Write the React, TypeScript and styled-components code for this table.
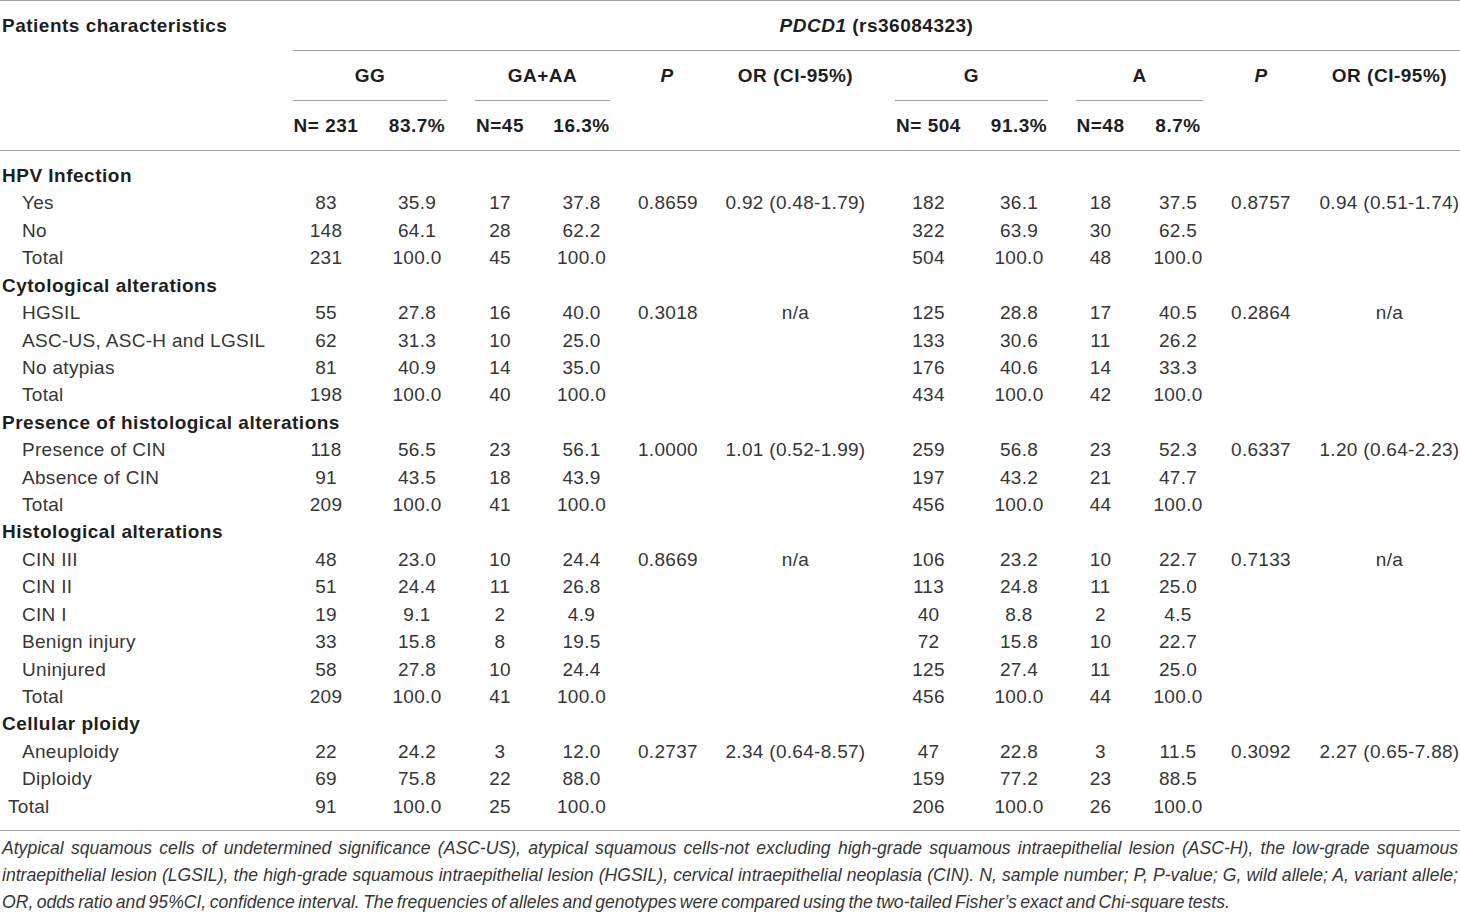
import React from "react";
import styled, { createGlobalStyle } from "styled-components";

const Global = createGlobalStyle`
  html, body { margin: 0; padding: 0; background: #ffffff; }
  body { font-family: "Liberation Sans", Arial, Helvetica, sans-serif; color: #2b2b2b; }
  * { box-sizing: border-box; }
`;

const LINE = "#a3a3a3";
const COLS = "265px 66px 60px 50px 57px 58px 143px 67px 58px 49px 50px 60px 141px";

const Page = styled.div`
  width: 1460px;
`;

const Table = styled.div`
  width: 1460px;
  border-top: 1px solid ${LINE};
`;

const Row = styled.div<{ $h: number; $rule?: boolean }>`
  display: grid;
  grid-template-columns: ${COLS};
  column-gap: 28px;
  height: ${(p) => p.$h}px;
  border-bottom: ${(p) => (p.$rule ? `1px solid ${LINE}` : "none")};
`;

const HeadCell = styled.div<{ $col: string; $align?: "left" | "center"; $rule?: boolean }>`
  grid-column: ${(p) => p.$col};
  display: flex;
  align-items: center;
  justify-content: ${(p) => (p.$align === "left" ? "flex-start" : "center")};
  padding-left: ${(p) => (p.$align === "left" ? "2px" : "0")};
  font-size: 19px;
  font-weight: 700;
  letter-spacing: 0.5px;
  color: #1e1e1e;
  white-space: nowrap;
  border-bottom: ${(p) => (p.$rule ? `1px solid ${LINE}` : "none")};
`;

const Ital = styled.span`
  font-style: italic;
`;

const Body = styled.div`
  padding: 11px 0 10px;
  border-bottom: 1px solid ${LINE};
`;

const DataRow = styled.div`
  display: grid;
  grid-template-columns: ${COLS};
  column-gap: 28px;
  height: 27.43px;
  line-height: 27.43px;
  font-size: 19px;
  letter-spacing: 0.3px;
  color: #363636;
  white-space: nowrap;
`;

const Category = styled.div`
  grid-column: 1 / -1;
  padding-left: 2px;
  font-weight: 700;
  letter-spacing: 0.5px;
  color: #1e1e1e;
`;

const Label = styled.div<{ $indent: number }>`
  padding-left: ${(p) => p.$indent}px;
`;

const Num = styled.div`
  text-align: center;
`;

const Note = styled.div`
  padding-top: 4px;
  font-size: 17.6px;
  word-spacing: -1.5px;
  font-style: italic;
  line-height: 27px;
  color: #363636;
`;

const NoteLine = styled.div<{ $justify?: boolean }>`
  padding: 0 2px;
  text-align: ${(p) => (p.$justify ? "justify" : "left")};
  text-align-last: ${(p) => (p.$justify ? "justify" : "left")};
  white-space: nowrap;
`;

type Item =
  | { kind: "cat"; label: string }
  | { kind: "row"; label: string; v: string[]; indent?: number };

const data: Item[] = [
  { kind: "cat", label: "HPV Infection" },
  { kind: "row", label: "Yes", v: ["83", "35.9", "17", "37.8", "0.8659", "0.92 (0.48-1.79)", "182", "36.1", "18", "37.5", "0.8757", "0.94 (0.51-1.74)"] },
  { kind: "row", label: "No", v: ["148", "64.1", "28", "62.2", "", "", "322", "63.9", "30", "62.5", "", ""] },
  { kind: "row", label: "Total", v: ["231", "100.0", "45", "100.0", "", "", "504", "100.0", "48", "100.0", "", ""] },
  { kind: "cat", label: "Cytological alterations" },
  { kind: "row", label: "HGSIL", v: ["55", "27.8", "16", "40.0", "0.3018", "n/a", "125", "28.8", "17", "40.5", "0.2864", "n/a"] },
  { kind: "row", label: "ASC-US, ASC-H and LGSIL", v: ["62", "31.3", "10", "25.0", "", "", "133", "30.6", "11", "26.2", "", ""] },
  { kind: "row", label: "No atypias", v: ["81", "40.9", "14", "35.0", "", "", "176", "40.6", "14", "33.3", "", ""] },
  { kind: "row", label: "Total", v: ["198", "100.0", "40", "100.0", "", "", "434", "100.0", "42", "100.0", "", ""] },
  { kind: "cat", label: "Presence of histological alterations" },
  { kind: "row", label: "Presence of CIN", v: ["118", "56.5", "23", "56.1", "1.0000", "1.01 (0.52-1.99)", "259", "56.8", "23", "52.3", "0.6337", "1.20 (0.64-2.23)"] },
  { kind: "row", label: "Absence of CIN", v: ["91", "43.5", "18", "43.9", "", "", "197", "43.2", "21", "47.7", "", ""] },
  { kind: "row", label: "Total", v: ["209", "100.0", "41", "100.0", "", "", "456", "100.0", "44", "100.0", "", ""] },
  { kind: "cat", label: "Histological alterations" },
  { kind: "row", label: "CIN III", v: ["48", "23.0", "10", "24.4", "0.8669", "n/a", "106", "23.2", "10", "22.7", "0.7133", "n/a"] },
  { kind: "row", label: "CIN II", v: ["51", "24.4", "11", "26.8", "", "", "113", "24.8", "11", "25.0", "", ""] },
  { kind: "row", label: "CIN I", v: ["19", "9.1", "2", "4.9", "", "", "40", "8.8", "2", "4.5", "", ""] },
  { kind: "row", label: "Benign injury", v: ["33", "15.8", "8", "19.5", "", "", "72", "15.8", "10", "22.7", "", ""] },
  { kind: "row", label: "Uninjured", v: ["58", "27.8", "10", "24.4", "", "", "125", "27.4", "11", "25.0", "", ""] },
  { kind: "row", label: "Total", v: ["209", "100.0", "41", "100.0", "", "", "456", "100.0", "44", "100.0", "", ""] },
  { kind: "cat", label: "Cellular ploidy" },
  { kind: "row", label: "Aneuploidy", v: ["22", "24.2", "3", "12.0", "0.2737", "2.34 (0.64-8.57)", "47", "22.8", "3", "11.5", "0.3092", "2.27 (0.65-7.88)"] },
  { kind: "row", label: "Diploidy", v: ["69", "75.8", "22", "88.0", "", "", "159", "77.2", "23", "88.5", "", ""] },
  { kind: "row", label: "Total", v: ["91", "100.0", "25", "100.0", "", "", "206", "100.0", "26", "100.0", "", ""], indent: 8 },
];

export default function App() {
  return (
    <Page>
      <Global />
      <Table>
        <Row $h={50}>
          <HeadCell $col="1" $align="left">Patients characteristics</HeadCell>
          <HeadCell $col="2 / -1" $rule>
            <Ital>PDCD1</Ital>&nbsp;(rs36084323)
          </HeadCell>
        </Row>
        <Row $h={50}>
          <HeadCell $col="2 / 4" $rule>GG</HeadCell>
          <HeadCell $col="4 / 6" $rule>GA+AA</HeadCell>
          <HeadCell $col="6"><Ital>P</Ital></HeadCell>
          <HeadCell $col="7">OR (CI-95%)</HeadCell>
          <HeadCell $col="8 / 10" $rule>G</HeadCell>
          <HeadCell $col="10 / 12" $rule>A</HeadCell>
          <HeadCell $col="12"><Ital>P</Ital></HeadCell>
          <HeadCell $col="13">OR (CI-95%)</HeadCell>
        </Row>
        <Row $h={50} $rule>
          <HeadCell $col="2">N= 231</HeadCell>
          <HeadCell $col="3">83.7%</HeadCell>
          <HeadCell $col="4">N=45</HeadCell>
          <HeadCell $col="5">16.3%</HeadCell>
          <HeadCell $col="8">N= 504</HeadCell>
          <HeadCell $col="9">91.3%</HeadCell>
          <HeadCell $col="10">N=48</HeadCell>
          <HeadCell $col="11">8.7%</HeadCell>
        </Row>
        <Body>
          {data.map((it, i) =>
            it.kind === "cat" ? (
              <DataRow key={i}>
                <Category>{it.label}</Category>
              </DataRow>
            ) : (
              <DataRow key={i}>
                <Label $indent={it.indent ?? 22}>{it.label}</Label>
                {it.v.map((v, j) => (
                  <Num key={j}>{v}</Num>
                ))}
              </DataRow>
            )
          )}
        </Body>
      </Table>
      <Note>
        <NoteLine $justify>
          Atypical squamous cells of undetermined significance (ASC-US), atypical squamous cells-not excluding high-grade squamous intraepithelial lesion (ASC-H), the low-grade squamous
        </NoteLine>
        <NoteLine $justify>
          intraepithelial lesion (LGSIL), the high-grade squamous intraepithelial lesion (HGSIL), cervical intraepithelial neoplasia (CIN). N, sample number; P, P-value; G, wild allele; A, variant allele;
        </NoteLine>
        <NoteLine>
          OR, odds ratio and 95%CI, confidence interval. The frequencies of alleles and genotypes were compared using the two-tailed Fisher’s exact and Chi-square tests.
        </NoteLine>
      </Note>
    </Page>
  );
}
